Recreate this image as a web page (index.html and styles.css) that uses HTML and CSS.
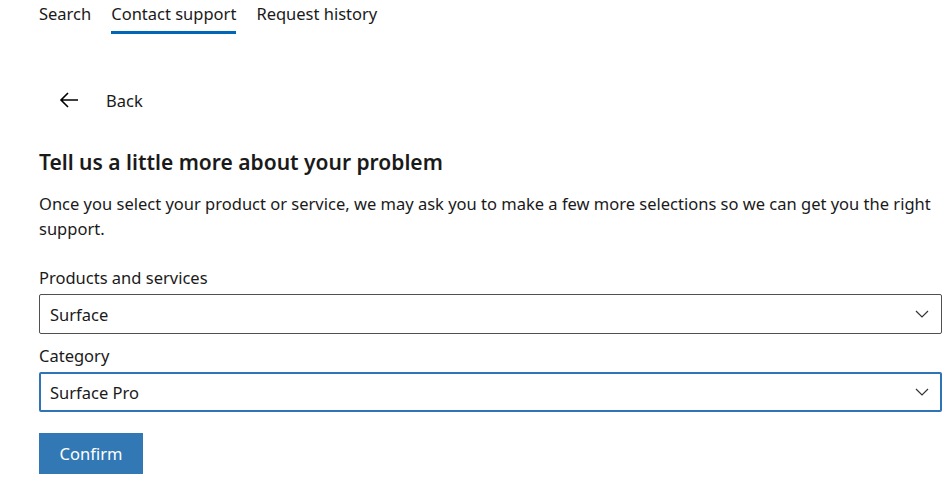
FILE: index.html
```html
<!DOCTYPE html>
<html lang="en">
<head>
<meta charset="utf-8">
<title>Contact support</title>
<link rel="stylesheet" href="styles.css">
</head>
<body>
<nav class="tabs">
  <a class="tab" href="#">Search</a>
  <a class="tab active" href="#">Contact support</a>
  <a class="tab" href="#">Request history</a>
</nav>
<main class="content">
  <button class="back" type="button">
    <svg class="back-icon" width="20" height="16" viewBox="0 0 20 16" aria-hidden="true">
      <path d="M19 8H2M9 1L2 8l7 7" fill="none" stroke="#000" stroke-width="1.6"/>
    </svg>
    <span>Back</span>
  </button>
  <h1 class="title">Tell us a little more about your problem</h1>
  <p class="intro">Once you select your product or service, we may ask you to make a few more selections so we can get you the right support.</p>
  <label class="label">Products and services</label>
  <div class="select">
    <span>Surface</span>
    <svg class="chev" width="14" height="8" viewBox="0 0 14 8" aria-hidden="true"><path d="M1 1l6 6 6-6" fill="none" stroke="#333" stroke-width="1.2"/></svg>
  </div>
  <label class="label">Category</label>
  <div class="select focused">
    <span>Surface Pro</span>
    <svg class="chev" width="14" height="8" viewBox="0 0 14 8" aria-hidden="true"><path d="M1 1l6 6 6-6" fill="none" stroke="#333" stroke-width="1.2"/></svg>
  </div>
  <button class="confirm" type="button">Confirm</button>
</main>
</body>
</html>
```
FILE: styles.css
```css
html, body {
  margin: 0;
  background: #fff;
}
body {
  font-family: "Noto Sans", "Open Sans", sans-serif;
  color: #1a1a1a;
  font-size: 16.5px;
  padding: 0 8px 0 39px;
}
.tabs {
  display: flex;
  gap: 20px;
  height: 34px;
  align-items: flex-start;
}
.tab {
  color: #1a1a1a;
  text-decoration: none;
  font-size: 16.5px;
  line-height: 20px;
  padding-top: 4px;
  height: 27px;
  border-bottom: 3px solid transparent;
}
.tab.active {
  border-bottom-color: #0067b8;
}
.content {
  display: flex;
  flex-direction: column;
  align-items: flex-start;
}
.back {
  margin-top: 54px;
  display: flex;
  align-items: center;
  gap: 27px;
  background: none;
  border: 0;
  padding: 0 0 0 20px;
  font: inherit;
  font-size: 16.5px;
  color: #1a1a1a;
  height: 24px;
}
.title {
  margin: 36px 0 0;
  font-size: 21px;
  font-weight: 600;
  line-height: 28px;
}
.intro {
  margin: 15px 0 0;
  font-size: 16.5px;
  line-height: 25px;
}
.label {
  margin-top: 25px;
  font-size: 16.5px;
  line-height: 24px;
}
.select {
  margin-top: 4px;
  box-sizing: border-box;
  width: 100%;
  height: 40px;
  border: 1px solid #505050;
  border-radius: 2px;
  display: flex;
  align-items: center;
  justify-content: space-between;
  padding: 0 10px 0 10px;
  font-size: 16.5px;
}
.select.focused {
  border: 2px solid #2f74b5;
  padding-left: 9px;
  padding-right: 9px;
}
.select + .label {
  margin-top: 10px;
}
.chev {
  margin-right: 2px;
}
.confirm {
  margin-top: 21px;
  width: 104px;
  height: 41px;
  background: #3278b4;
  color: #fff;
  border: 0;
  font: inherit;
  font-size: 16.5px;
}
```
